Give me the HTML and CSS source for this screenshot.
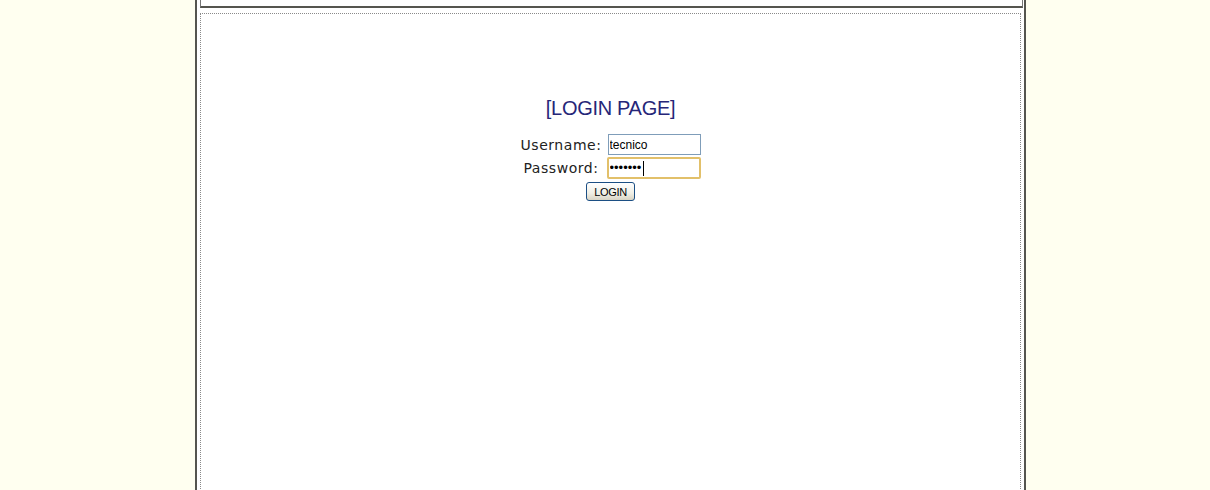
FILE: index.html
```html
<!DOCTYPE html>
<html lang="en">
<head>
<meta charset="utf-8">
<title>Login</title>
<link rel="stylesheet" href="styles.css">
</head>
<body>
<div class="frame">
  <div class="frame-top"></div>
  <div class="content">
    <h1 class="title">[LOGIN PAGE]</h1>
    <form class="login-form" action="#">
      <div class="row">
        <label class="label" for="user">Username:</label>
        <input class="field" id="user" type="text" value="tecnico">
      </div>
      <div class="row">
        <label class="label" for="pass">Password:</label>
        <span class="field-wrap">
          <input class="field field-focus" id="pass" type="password" value="tecnico">
          <span class="caret"></span>
        </span>
      </div>
      <div class="row row-button">
        <button class="btn" type="submit">LOGIN</button>
      </div>
    </form>
  </div>
</div>
</body>
</html>
```

FILE: styles.css
```css
html, body {
  margin: 0;
  padding: 0;
  height: 100%;
  overflow: hidden;
}

body {
  background: #fffff0;
  font-family: "DejaVu Sans", Verdana, sans-serif;
}

/* outer page column with its heavy side rules */
.frame {
  margin-left: 195px;
  width: 821px;
  min-height: 100%;
  border-left: 2px solid #55554f;
  border-right: 2px solid #55554f;
  background: #ffffff;
  padding: 0 3px;
}

/* bottom edge of the header cell above */
.frame-top {
  height: 6px;
  border-left: 1px solid #777;
  border-right: 1px solid #777;
  border-bottom: 2px solid #55554f;
  margin-right: -2px;
}

.content {
  margin-top: 5px;
  height: 600px;
  border: 1px dotted #8a8a8a;
  box-sizing: border-box;
  padding-top: 82px;
}

.title {
  margin: 0;
  text-align: center;
  font-family: "Liberation Sans", Arial, sans-serif;
  font-weight: normal;
  font-size: 20px;
  line-height: 24px;
  letter-spacing: -0.3px;
  color: #262678;
}

.login-form {
  margin-top: 13px;
  display: flex;
  flex-direction: column;
  align-items: center;
}

.row {
  display: flex;
  align-items: center;
  gap: 6px;
  height: 23px;
}

.label {
  font-size: 14px;
  color: #222;
  width: 81px;
  text-align: center;
  letter-spacing: 0.55px;
}

.field-wrap {
  position: relative;
  display: inline-flex;
}

.field {
  width: 93px;
  height: 21px;
  box-sizing: border-box;
  margin: 0;
  padding: 1px 1px;
  border: 1px solid #7f9db9;
  font-family: "Liberation Sans", Arial, sans-serif;
  font-size: 12px;
  color: #000;
  background: #fff;
  outline: none;
}

.field-focus {
  width: 94px;
  height: 22px;
  border: 2px solid #e2c06a;
  border-radius: 2px;
  font-size: 13px;
  letter-spacing: 0;
  margin-left: -1px;
}

.caret {
  position: absolute;
  left: 35px;
  top: 4px;
  width: 1px;
  height: 15px;
  background: #000;
}

.row-button {
  height: 25px;
}

.btn {
  width: 49px;
  height: 19px;
  padding: 0;
  border: 1px solid #1c4f84;
  border-radius: 3px;
  background: linear-gradient(#ffffff, #f0efe6 60%, #d8d4c4);
  font-family: "Liberation Sans", Arial, sans-serif;
  font-size: 11px;
  letter-spacing: -0.3px;
  color: #000;
}
```
